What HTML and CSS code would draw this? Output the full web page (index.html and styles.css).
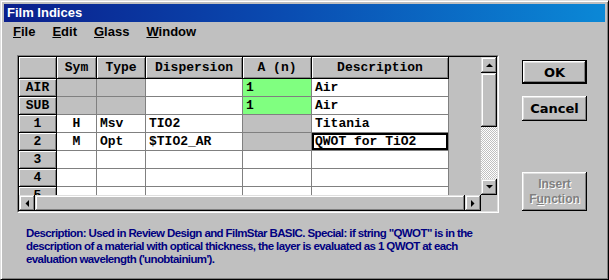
FILE: index.html
```html
<!DOCTYPE html>
<html>
<head>
<meta charset="utf-8">
<title>Film Indices</title>
<link rel="stylesheet" href="styles.css">
</head>
<body>
<div class="win">
  <div class="title">Film Indices</div>
  <div class="menu">
    <span class="mi"><u>F</u>ile</span>
    <span class="mi"><u>E</u>dit</span>
    <span class="mi"><u>G</u>lass</span>
    <span class="mi"><u>W</u>indow</span>
  </div>
  <div class="body">
    <div class="frame">
      <div class="frame-in">
        <div class="main">
          <div class="cells">
            <div class="hc"></div><div class="hc">Sym</div><div class="hc">Type</div><div class="hc">Dispersion</div><div class="hc">A (n)</div><div class="hc">Description</div>

            <div class="rh">AIR</div><div class="c g"></div><div class="c g"></div><div class="c"></div><div class="c gr">1</div><div class="c">Air</div>
            <div class="rh">SUB</div><div class="c g"></div><div class="c g"></div><div class="c"></div><div class="c gr">1</div><div class="c">Air</div>
            <div class="rh">1</div><div class="c ctr">H</div><div class="c">Msv</div><div class="c">TIO2</div><div class="c g"></div><div class="c">Titania</div>
            <div class="rh">2</div><div class="c ctr">M</div><div class="c">Opt</div><div class="c">$TIO2_AR</div><div class="c g"></div><div class="c sel">QWOT for TiO2</div>
            <div class="rh">3</div><div class="c"></div><div class="c"></div><div class="c"></div><div class="c"></div><div class="c"></div>
            <div class="rh">4</div><div class="c"></div><div class="c"></div><div class="c"></div><div class="c"></div><div class="c"></div>
            <div class="rh rh-cut">5</div><div class="c"></div><div class="c"></div><div class="c"></div><div class="c"></div><div class="c"></div>
          </div>
          <div class="hscroll">
            <div class="sb"><svg width="4" height="7" viewBox="0 0 4 7"><polygon points="4,0 4,7 0.5,3.5" fill="#000"/></svg></div>
            <div class="thumb"></div>
            <div class="sb"><svg width="4" height="7" viewBox="0 0 4 7"><polygon points="0,0 0,7 3.5,3.5" fill="#000"/></svg></div>
          </div>
        </div>
        <div class="vscroll">
          <div class="sb"><svg width="7" height="4" viewBox="0 0 7 4"><polygon points="0,4 7,4 3.5,0.5" fill="#000"/></svg></div>
          <div class="vthumb"></div>
          <div class="track"></div>
          <div class="sb"><svg width="7" height="4" viewBox="0 0 7 4"><polygon points="0,0 7,0 3.5,3.5" fill="#000"/></svg></div>
          <div class="corner"></div>
        </div>
      </div>
    </div>
    <div class="buttons">
      <div class="btn def"><span class="face">OK</span></div>
      <div class="btn cancel"><span class="face">Cancel</span></div>
      <div class="btn dis"><span class="face">Insert<br>F<u>u</u>nction</span></div>
    </div>
  </div>
  <p class="desc">Description: Used in Review Design and FilmStar BASIC. Special: if string "QWOT" is in the<br>description of a material with optical thickness, the layer is evaluated as 1 QWOT at each<br>evaluation wavelength ('unobtainium').</p>
</div>
</body>
</html>
```
FILE: styles.css
```css
* { box-sizing: border-box; }
body { margin: 0; background: #c0c0c0; }

.win {
  width: 609px;
  height: 280px;
  background: #c0c0c0;
  border: 1px solid;
  border-color: #dfdfdf #000 #000 #dfdfdf;
  box-shadow: inset 1px 1px #fff, inset -1px -1px #808080;
  padding: 3px;
  font-family: "Liberation Sans", Arial, sans-serif;
}

.title {
  height: 18px;
  background: linear-gradient(90deg, #0a1f8c 0%, #0a4ab0 45%, #0b88d6 100%);
  color: #fff;
  font-weight: bold;
  font-size: 13px;
  line-height: 18px;
  padding-left: 3px;
}

.menu {
  height: 19px;
  display: flex;
  align-items: center;
  gap: 17px;
  padding-left: 9px;
  font-weight: bold;
  font-size: 13px;
  color: #000;
}

.body {
  display: flex;
  align-items: flex-start;
  margin-top: 14px;
  margin-left: 13px;
}

.frame {
  border: 1px solid;
  border-color: #808080 #fff #fff #808080;
}
.frame-in {
  border: 1px solid;
  border-color: #000 #dfdfdf #dfdfdf #000;
  display: flex;
  width: 480px;
  height: 156px;
}

.main {
  width: 462px;
  display: flex;
  flex-direction: column;
}

.cells {
  height: 138px;
  overflow: hidden;
  background: #c0c0c0;
  display: grid;
  grid-template-columns: 38px 40px 49px 97px 69px 137px;
  grid-template-rows: 22px;
  grid-auto-rows: 18px;
  align-content: start;
  justify-content: start;
  font-family: "Liberation Mono", "DejaVu Sans Mono", monospace;
  font-weight: bold;
  font-size: 13px;
  color: #000;
}

.hc, .rh {
  background: #c0c0c0;
  border-right: 1px solid #000;
  border-bottom: 1px solid #000;
  box-shadow: inset 1px 1px #fff, inset -1px -1px #808080;
  display: flex;
  align-items: center;
  justify-content: center;
}
.rh-cut { align-items: flex-start; padding-top: 1px; line-height: 15px; }

.c {
  background: #fff;
  border-right: 1px solid #808080;
  border-bottom: 1px solid #808080;
  display: flex;
  align-items: center;
  padding-left: 3px;
  white-space: nowrap;
}
.c.g { background: #c0c0c0; }
.c.gr { background: #80ff80; }
.c.ctr { justify-content: center; padding-left: 0; }
.c.sel { box-shadow: inset 0 0 0 2px #000; }

.sb {
  width: 16px;
  height: 16px;
  flex: none;
  background: #c0c0c0;
  box-shadow: inset -1px -1px #000, inset 1px 1px #dfdfdf, inset -2px -2px #808080, inset 2px 2px #fff;
  display: flex;
  align-items: center;
  justify-content: center;
}
.sb svg { display: block; }

.hscroll {
  height: 16px;
  display: flex;
}
.thumb {
  flex: 1;
  background: #c0c0c0;
  box-shadow: inset -1px -1px #000, inset 1px 1px #dfdfdf, inset -2px -2px #808080, inset 2px 2px #fff;
}

.vscroll {
  width: 16px;
  display: flex;
  flex-direction: column;
}
.vthumb {
  height: 54px;
  background: #c0c0c0;
  box-shadow: inset -1px -1px #000, inset 1px 1px #dfdfdf, inset -2px -2px #808080, inset 2px 2px #fff;
}
.track {
  height: 52px;
  background: repeating-conic-gradient(#fff 0 25%, #c0c0c0 0 50%) 0 0 / 2px 2px;
}
.corner {
  height: 16px;
  background: #c0c0c0;
}

.buttons {
  margin-left: 23px;
  padding-top: 5px;
  display: flex;
  flex-direction: column;
  width: 65px;
}

.btn {
  width: 65px;
  background: #c0c0c0;
  box-shadow: inset -1px -1px #000, inset 1px 1px #fff, inset -2px -2px #808080, inset 2px 2px #dfdfdf;
  display: flex;
  align-items: center;
  justify-content: center;
  font-family: "DejaVu Sans", "Liberation Sans", sans-serif;
  font-weight: bold;
  font-size: 13px;
  color: #000;
  text-align: center;
  line-height: 17px;
}
.btn.def {
  height: 24px;
  border: 1px solid #000;
}
.btn.cancel {
  height: 25px;
  margin-top: 12px;
}
.btn.dis {
  height: 39px;
  margin-top: 51px;
  color: #808080;
  text-shadow: 1px 1px #fff;
  font-family: "Liberation Sans", Arial, sans-serif;
  font-size: 12px;
  line-height: 15px;
}

.desc {
  margin: 14px 0 0 22px;
  font-weight: bold;
  font-size: 11.5px;
  letter-spacing: -0.6px;
  line-height: 13px;
  color: #000080;
  white-space: nowrap;
}
```
